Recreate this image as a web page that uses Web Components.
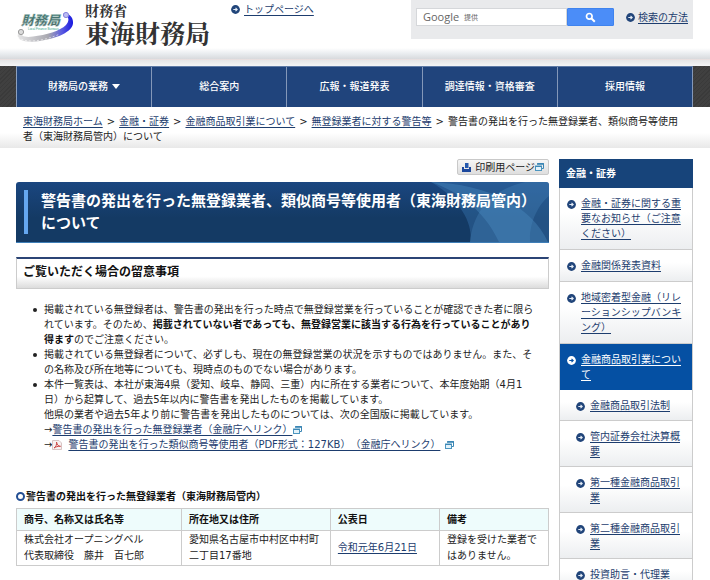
<!DOCTYPE html>
<html lang="ja">
<head>
<meta charset="utf-8">
<meta name="viewport" content="width=device-width">
<title>東海財務局</title>
<style>
body { margin: 0; background: #fff; color: #222; font: 10px/15px "DejaVu Sans", "Noto Sans CJK JP", sans-serif; text-spacing-trim: space-all;
  --link: #1d3d6e; --navy: #20447c; --gutter: 16px; }
.columns { display: grid; grid-template-columns: minmax(0, 533fr) minmax(0, 134fr); gap: 10px; padding: 11px 17px 0 var(--gutter); align-items: start; }
</style>
</head>
<body>
<site-header></site-header>
<site-nav></site-nav>
<bread-crumbs></bread-crumbs>
<div class="columns">
  <main>
    <print-button>印刷用ページ</print-button>
    <page-title>警告書の発出を行った無登録業者、類似商号等使用者（東海財務局管内）について</page-title>
    <section-title>ご覧いただく場合の留意事項</section-title>
    <notice-list></notice-list>
    <dealer-table></dealer-table>
  </main>
  <side-menu>
    <span slot="title">金融・証券</span>
    <side-item>金融・証券に関する重要なお知らせ（ご注意ください）</side-item>
    <side-item>金融関係発表資料</side-item>
    <side-item>地域密着型金融（リレーションシップバンキング）</side-item>
    <side-item current>金融商品取引業について</side-item>
    <side-item sub>金融商品取引法制</side-item>
    <side-item sub>管内証券会社決算概要</side-item>
    <side-item sub>第一種金融商品取引業</side-item>
    <side-item sub>第二種金融商品取引業</side-item>
    <side-item sub>投資助言・代理業</side-item>
  </side-menu>
</div>
<script>
const base = `*{box-sizing:border-box} a{color:var(--link);text-decoration:underline;text-underline-offset:2px} h1,h2,h3,ul{margin:0;padding:0;font-size:inherit}`;
function define(name, css, html) {
  customElements.define(name, class extends HTMLElement {
    constructor() {
      super();
      this.attachShadow({ mode: 'open' }).innerHTML = `<style>${base}${css}</style>${html}`;
    }
  });
}

define('arrow-dot', `:host{display:inline-block;width:9px;height:9px;flex:none} svg{display:block}`,
 `<svg width="9" height="9" viewBox="0 0 9 9" aria-hidden="true"><circle cx="4.5" cy="4.5" r="4.4" style="fill:var(--dot,#21457a)"/><path d="M2.300 4.500H6M4.500 2.800L6.200 4.500L4.500 6.200" fill="none" style="stroke:var(--dot-arrow,#e4ecf6)" stroke-width="1.1"/></svg>`);

define('window-icon', `:host{display:inline-block;width:9px;height:8px;vertical-align:-1px} svg{display:block}`,
 `<svg width="9" height="8" viewBox="0 0 9 8" aria-hidden="true"><path d="M2.5 .5H8.5V5.5H7" fill="none" stroke="#3b86b5"/><path d="M2 1H9" stroke="#3b86b5" stroke-width="1.6"/><rect x=".5" y="3" width="6" height="4.5" fill="#e3f2fa" stroke="#4b95bf"/><path d="M.5 3.5H6.5" stroke="#3b86b5"/></svg>`);

define('bureau-logo', `:host{display:block;width:60px;height:36px} svg{display:block}`,
 `<svg width="60" height="36" viewBox="0 0 60 36" role="img" aria-label="財務局">
  <defs><linearGradient id="g" x1="0" x2="1"><stop offset="0" stop-color="#e6e6e6"/><stop offset=".55" stop-color="#a8a8b0"/><stop offset=".8" stop-color="#5a5ae0"/><stop offset="1" stop-color="#1717e0"/></linearGradient>
  <linearGradient id="t" x1="0" y1="0" x2="0" y2="1"><stop offset="0" stop-color="#3f7c78"/><stop offset="1" stop-color="#536967"/></linearGradient></defs>
  <path d="M5 20C-3 29 4 34 20 32.500C42 30 58 22 57 13C57 8 53 4 47 4C53 7 54 11 50 16C44 22 30 26 17 27.500C7 29 3 26 5 20Z" fill="url(#g)"/>
  <path d="M2 28C9 35 28 32 44 25" fill="none" stroke="#fff" stroke-width="1" stroke-dasharray="2 2" opacity=".6"/>
  <circle cx="5" cy="23" r="2.600" fill="#ddd" stroke="#9a9a9a"/><circle cx="50" cy="6" r="2.600" fill="#bcbcf2" stroke="#8585df"/>
  <text x="5" y="16" font-family="Noto Sans CJK JP" font-size="13" font-style="italic" font-weight="900" fill="url(#t)" stroke="#aac8c2" stroke-width=".4">財務局</text>
  <text x="12" y="21" font-family="Liberation Sans" font-size="3" fill="#31a287">Local Finance Bureaus</text></svg>`);

define('site-search', `:host{display:block;background:#e9eaec;padding:8px 5px 13px}
 form{display:flex;align-items:center}
 .field{flex:1;display:flex;align-items:center;height:18px;background:#fff;border:1px solid #d5d7da;padding-left:6px;color:#666;min-width:0}
 label{font:11px/16px "Open Sans","Noto Sans CJK JP",sans-serif;white-space:nowrap} small{font-size:7px;margin-left:2px;vertical-align:1px}
 input{flex:1;width:0;min-width:0;border:0;background:none;outline:0;font:inherit;padding:0 4px}
 button{width:47px;height:18px;border:1px solid #3f83ee;background:#4b8df8;padding:0;display:grid;place-items:center;border-radius:1px}
 a{margin-left:3px;white-space:nowrap} arrow-dot{margin-left:12px}`,
 `<form><div class="field"><label for="q">Google <small>提供</small></label><input id="q" type="text"></div>
 <button type="button" aria-label="検索"><svg width="11" height="11" viewBox="0 0 11 11"><circle cx="4.300" cy="4.300" r="2.800" fill="none" stroke="#fff" stroke-width="1.700"/><path d="M6.300 6.300L9.800 9.800" stroke="#fff" stroke-width="2"/></svg></button>
 <arrow-dot></arrow-dot><a href="#">検索の方法</a></form>`);

define('site-header', `:host{display:block;background:linear-gradient(#fff 48px,#e8ebee 54px,#d8dadd 59px,#e8dfdf 59px,#e8dfdf 60px,#e4e5e6 60px,#f4f5f6 66px);height:66px}
 .row{display:flex;align-items:flex-start;padding:0 17px 0 16px}
 bureau-logo{margin-top:9px}
 .name{font-family:"Noto Serif CJK JP","Noto Sans CJK JP",serif;font-weight:700;color:#333;margin-left:9px;white-space:nowrap}
 .name span{display:block;font-size:14px;line-height:20px} .name b{display:block;font-size:25px;line-height:25px;font-weight:700}
 .top{display:flex;align-items:center;gap:4px;margin:2px 0 0 21px;white-space:nowrap}
 site-search{margin-left:auto;flex:0 1 282px}`,
 `<header class="row"><bureau-logo></bureau-logo><div class="name"><span>財務省</span><b>東海財務局</b></div>
 <div class="top"><arrow-dot></arrow-dot><a href="#">トップページへ</a></div><site-search></site-search></header>`);

define('site-nav', `:host{display:block;background:repeating-linear-gradient(135deg,#3a3a3a 0 1px,#404040 1px 3px);padding:0 17px 0 16px}
 nav{display:grid;grid-template-columns:repeat(5,1fr);border-left:1px solid #8ba0bf;border-top:1px solid #5f7ba6}
 a{display:flex;align-items:center;justify-content:center;gap:4px;height:40px;padding-bottom:2px;color:#fff;text-decoration:none;background:var(--navy);border-right:1px solid #8498b9;font-weight:500}
 i{border:4px solid transparent;border-top:5px solid #fff;border-bottom:0}`,
 `<nav><a href="#">財務局の業務<i></i></a><a href="#">総合案内</a><a href="#">広報・報道発表</a><a href="#">調達情報・資格審査</a><a href="#">採用情報</a></nav>`);

define('bread-crumbs', `:host{display:block;padding:7px 28px 4px 23px;background:linear-gradient(#fff 26px,#e8e8e8)} span{margin:0 4px}`,
 `<nav aria-label="パンくず"><a href="#">東海財務局ホーム</a><span>&gt;</span><a href="#">金融・証券</a><span>&gt;</span><a href="#">金融商品取引業について</a><span>&gt;</span><a href="#">無登録業者に対する警告等</a><span>&gt;</span>警告書の発出を行った無登録業者、類似商号等使用者（東海財務局管内）について</nav>`);

define('print-button', `:host{display:flex;justify-content:flex-end}
 button{display:flex;align-items:center;height:16px;padding:0 4px;border:1px solid #c9c9c9;border-radius:2px;background:linear-gradient(#f6f6f6,#dedede);font:inherit;color:#222}
 svg{margin-right:4px}`,
 `<button type="button"><svg width="9" height="9" viewBox="0 0 9 9" aria-hidden="true"><path d="M0 4H2V6H7V4H9V9H0Z" fill="#1b479d"/><path d="M3 0H6.500V5H3Z" fill="#2458ae"/></svg><slot></slot><window-icon></window-icon></button>`);

define('page-title', `:host{display:block;margin-top:7px}
 h1{position:relative;overflow:hidden;color:#fff;font-size:15px;line-height:22px;font-weight:700;padding:8px 10px 8px 8px;border-radius:3px 3px 0 0;border-bottom:1px solid #3f7fb8;background:linear-gradient(#1a4680,#143a64 60%,#143a64)}
 div{position:relative;border-left:4px solid #65a7f0;padding-left:13px}
 svg{position:absolute;right:0;top:0;height:100%}`,
 `<h1><svg width="118" height="60" viewBox="0 0 118 60" preserveAspectRatio="none" aria-hidden="true">
 <path d="M0 0H118V60H39C43 42 28 16 0 0Z" fill="#3a78b4" opacity=".4"/>
 <path d="M0 0C44 2 96 16 117 60H68C56 34 34 12 0 0Z" fill="#4a8cc0" opacity=".4"/>
 <path d="M94 0C60 8 42 30 39 60H99C98 40 108 22 118 14V0Z" fill="#4e90c4" opacity=".28"/></svg><div><slot></slot></div></h1>`);

define('section-title', `:host{display:block;margin-top:14px}
 h2{font-size:12px;line-height:18px;font-weight:700;color:#111;padding:4px 6px 7px;border:1px solid #ccc;border-top:2px solid #2b4475;background:linear-gradient(#fff 60%,#dcdcdc)}`,
 `<h2><slot></slot></h2>`);

define('pdf-icon', `:host{display:inline-block;width:10px;height:10px;margin-right:6px;vertical-align:-2px} svg{display:block}`,
 `<svg width="10" height="10" viewBox="0 0 10 10" aria-hidden="true"><path d="M.5 .5H7L9.500 3V9.500H.5Z" fill="#f7f1f1" stroke="#d8c4c4"/><path d="M2 8C4 7 5 4 4.500 2C5 5 6.500 6.500 8.500 6.300C6 6 3.500 7 2 8" fill="none" stroke="#cd4646"/></svg>`);

define('notice-list', `:host{display:block;margin-top:13px} ul{padding:0 14px 0 28px;list-style:none}
 li{position:relative} li::before{content:"";position:absolute;left:-11px;top:6px;width:4px;height:4px;border-radius:50%;background:#222} b{color:#111} window-icon{margin-left:1px}`,
 `<ul><li>掲載されている無登録者は、警告書の発出を行った時点で無登録営業を行っていることが確認できた者に限られています。そのため、<b>掲載されていない者であっても、無登録営業に該当する行為を行っていることがあり得ます</b>のでご注意ください。</li>
 <li>掲載されている無登録者について、必ずしも、現在の無登録営業の状況を示すものではありません。また、その名称及び所在地等についても、現時点のものでない場合があります。</li>
 <li>本件一覧表は、本社が東海4県（愛知、岐阜、静岡、三重）内に所在する業者について、本年度始期（4月1日）から起算して、過去5年以内に警告書を発出したものを掲載しています。<br>他県の業者や過去5年より前に警告書を発出したものについては、次の全国版に掲載しています。<br>→<a href="#">警告書の発出を行った無登録業者（金融庁へリンク）</a><window-icon></window-icon><br>→<pdf-icon></pdf-icon><a href="#">警告書の発出を行った類似商号等使用者（PDF形式：127KB）（金融庁へリンク）</a> <window-icon></window-icon></li></ul>`);

define('dealer-table', `:host{display:block;margin-top:37px}
 h3{display:flex;align-items:center;gap:1px;color:#111;padding-bottom:4px} h3::before{content:"";box-sizing:border-box;width:9px;height:9px;border:2px solid #234f94;border-radius:50%}
 table{width:100%;table-layout:fixed;border-collapse:collapse} th,td{border:1px solid #ccc;text-align:left;padding:1px 7px;font-size:10px;line-height:16px} th{background:#eefcfc;padding:3px 7px;line-height:15px;color:#111}
 .a{width:31%}.b{width:28%}`,
 `<h3>警告書の発出を行った無登録業者（東海財務局管内）</h3>
 <table><thead><tr><th class="a">商号、名称又は氏名等</th><th class="b">所在地又は住所</th><th>公表日</th><th>備考</th></tr></thead>
 <tbody><tr><td>株式会社オープニングベル<br>代表取締役　藤井　百七郎</td><td>愛知県名古屋市中村区中村町二丁目17番地</td><td><a href="#">令和元年6月21日</a></td><td>登録を受けた業者ではありません。</td></tr></tbody></table>`);

define('side-item', `:host{display:block;border-bottom:1px solid #ccc;background:linear-gradient(#fff 40%,#eceef0);padding:8px 10px 8px 7px}
 :host([sub]){padding:8px 10px 7px 16px} :host([current]){background:#0550a3;border-bottom:0;--link:#fff;--dot:#fff;--dot-arrow:#0550a3}
 .r{display:flex;gap:5px} arrow-dot{margin-top:4px} a{line-break:loose}`,
 `<div class="r"><arrow-dot></arrow-dot><a href="#"><slot></slot></a></div>`);

define('side-menu', `:host{display:block} h2{background:#17447a;color:#fff;padding:7px;line-height:15px} nav{border:1px solid #ccc;border-width:0 1px}`,
 `<h2><slot name="title"></slot></h2><nav><slot></slot></nav>`);
</script>
</body>
</html>
